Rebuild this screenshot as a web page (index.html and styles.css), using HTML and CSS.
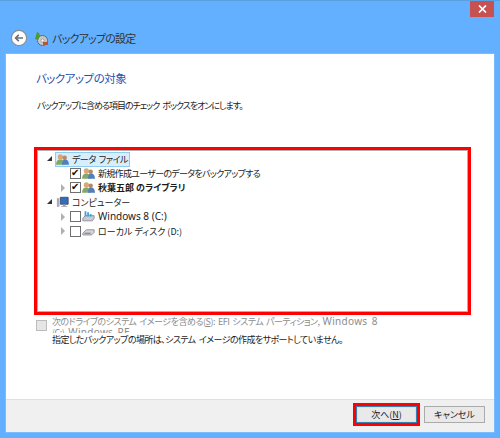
FILE: index.html
```html
<!DOCTYPE html>
<html lang="ja">
<head>
<meta charset="utf-8">
<title>バックアップの設定</title>
<link rel="stylesheet" href="styles.css">
</head>
<body>
<div class="window">
  <div class="titlebar">
    <button class="close" aria-label="閉じる"><svg width="9" height="8" viewBox="0 0 9 8"><path d="M1 .5 8 7.5M8 .5 1 7.5" stroke="#fff" stroke-width="1.7"/></svg></button>
    <div class="nav">
      <span class="back"><svg width="18" height="18" viewBox="0 0 18 18"><circle cx="9" cy="9" r="7.6" fill="#fff" stroke="#8a8f96" stroke-width="1.2"/><path d="M13 9H6M8.8 5.8 5.6 9l3.2 3.2" fill="none" stroke="#6e7074" stroke-width="1.7"/></svg></span>
      <svg class="appicon" width="15" height="15" viewBox="0 0 15 15"><circle cx="8.5" cy="9.500" r="5" fill="#c9c9c9" stroke="#666"/><circle cx="8.500" cy="9.500" r="1.6" fill="#fff" stroke="#777" stroke-width=".6"/><path d="M1 8 3 1l2 1 1 3-2 4Z" fill="#4f9a2c"/><path d="M9 11h5v3H9Z" fill="#b5563c"/></svg>
      <span class="wintitle">バックアップの設定</span>
    </div>
  </div>
  <div class="panel">
    <main class="content">
      <h1>バックアップの対象</h1>
      <p class="intro">バックアップに含める項目のチェック ボックスをオンにします。</p>
      <div class="treewrap">
        <ul class="tree">
          <li class="row"><span class="exp open"></span><span class="node top selected"><span class="rowicon"><svg width="13" height="13" viewBox="0 0 15 14"><circle cx="5" cy="4" r="3" fill="#d8a878"/><path d="M0 13c0-4 2-6 5-6s5 2 5 6Z" fill="#7fa86a"/><circle cx="10" cy="5" r="2.6" fill="#b98a62"/><path d="M7 13c0-4 1-6 3.500-6S15 9 15 13Z" fill="#4f7fc0"/></svg></span><span class="label tight">データ ファイル</span></span></li>
          <li class="row l2"><span class="exp none"></span><span class="check on"></span><span class="node"><span class="rowicon"><svg width="13" height="13" viewBox="0 0 15 14"><circle cx="5" cy="4" r="3" fill="#d8a878"/><path d="M0 13c0-4 2-6 5-6s5 2 5 6Z" fill="#7fa86a"/><circle cx="10" cy="5" r="2.600" fill="#b98a62"/><path d="M7 13c0-4 1-6 3.500-6S15 9 15 13Z" fill="#4f7fc0"/></svg></span><span class="label tighter">新規作成ユーザーのデータをバックアップする</span></span></li>
          <li class="row l2"><span class="exp closed"></span><span class="check on"></span><span class="node"><span class="rowicon"><svg width="13" height="13" viewBox="0 0 15 14"><circle cx="5" cy="4" r="3" fill="#d8a878"/><path d="M0 13c0-4 2-6 5-6s5 2 5 6Z" fill="#7fa86a"/><circle cx="10" cy="5" r="2.600" fill="#b98a62"/><path d="M7 13c0-4 1-6 3.500-6S15 9 15 13Z" fill="#4f7fc0"/></svg></span><span class="label bold">秋葉五郎 のライブラリ</span></span></li>
          <li class="row"><span class="exp open"></span><span class="node top"><span class="rowicon"><svg width="13" height="13" viewBox="0 0 15 14"><path d="M5 1h9v8H5Z" fill="#2f6fc2" stroke="#445"/><path d="M8 9h3v2h2v1H6v-1h2Z" fill="#99a"/><path d="M1 2h3v10H1Z" fill="#aab"/></svg></span><span class="label">コンピューター</span></span></li>
          <li class="row l2"><span class="exp closed"></span><span class="check"></span><span class="node"><span class="rowicon"><svg width="13" height="13" viewBox="0 0 15 14"><path d="M1 9 4 6h10v3l-2 3H1Z" fill="#c8ccd0" stroke="#889"/><path d="M3 1h2v6H3ZM6 2h2v5H6ZM9 4h2v3H9Z" fill="#39a0dc"/></svg></span><span class="label latin">Windows 8 (C:)</span></span></li>
          <li class="row l2"><span class="exp closed"></span><span class="check"></span><span class="node"><span class="rowicon"><svg width="13" height="13" viewBox="0 0 15 14"><path d="M1 9 5 5h9v3l-3 3H1Z" fill="#d4d6d8" stroke="#889"/><path d="M3 9h7" stroke="#667"/></svg></span><span class="label">ローカル ディスク (D:)</span></span></li>
        </ul>
      </div>
      <div class="sysimage">
        <span class="check disabled"></span>
        <span class="systext">次のドライブのシステム イメージを含める(<u>S</u>): EFI システム パーティション, <span class="syslatin">Windows 8</span><br>(C:)、<span class="syslatin">Windows RE</span></span>
      </div>
      <p class="warn">指定したバックアップの場所は、システム イメージの作成をサポートしていません。</p>
    </main>
    <footer class="footer">
      <button class="btn primary">次へ(<u>N</u>)</button>
      <button class="btn">キャンセル</button>
    </footer>
  </div>
</div>
</body>
</html>
```
FILE: styles.css
```css
* { box-sizing: border-box; }
html, body { margin: 0; padding: 0; }
body { width: 500px; height: 438px; overflow: hidden; font-family: "Noto Sans CJK JP", "Noto Sans", sans-serif; font-size: 9px; color: #1a1a1a; font-feature-settings: "palt"; }
.window { width: 500px; height: 438px; background: #62b0ff; border-top: 1px solid #5a9fe0; display: flex; flex-direction: column; }
.titlebar { height: 53px; position: relative; flex: none; }
.close { position: absolute; top: 0; right: 6px; width: 24px; height: 16px; padding: 0; border: 0; background: #c75050; display: flex; align-items: center; justify-content: center; }
.nav { display: flex; align-items: center; padding: 28px 0 0 10px; }
.back { width: 18px; height: 18px; display: block; }
.back svg, .appicon { display: block; }
.appicon { margin-left: 6px; }
.wintitle { margin-left: 3px; font-size: 11px; letter-spacing: -.8px; color: #333; }
.panel { margin: 0 6px; width: 488px; height: 378px; background: #fff; display: flex; flex-direction: column; flex: none; box-shadow: 0 0 0 1px #7bbcff; }
.content { flex: 1; padding: 14px 0 0 30px; display: flex; flex-direction: column; min-height: 0; }
h1 { margin: 0; font-size: 11.5px; font-weight: 400; line-height: 20px; letter-spacing: -.5px; color: #2a4fb0; }
.intro { margin: 11px 0 0 1px; font-size: 9px; line-height: 14px; letter-spacing: -1.02px; word-spacing: 2px; }
.treewrap { margin-top: 34px; margin-left: -2px; width: 437px; height: 168px; border: 3px solid #f00; position: relative; box-shadow: inset 0 0 0 1px #b0b0b0; }
.tree { list-style: none; margin: 0; padding: 2px 0 0 8px; }
.row { height: 14.4px; display: flex; align-items: center; }
.l2 { padding-left: 15px; }
.exp { width: 10px; height: 8px; flex: none; position: relative; display: block; }
.exp.open::before { content: ""; position: absolute; left: 2px; top: 1px; border-style: solid; border-width: 0 0 5px 5px; border-color: transparent transparent #333 transparent; }
.exp.closed::before { content: ""; position: absolute; left: 2px; top: 0; border-style: solid; border-width: 4px 0 4px 4px; border-color: transparent transparent transparent #b0b0b0; }
.l2 .exp.closed::before { left: 1px; }
.check { width: 11px; height: 11px; border: 1px solid #707070; background: #fff; flex: none; position: relative; display: block; margin-right: 1px; }
.check.on::after { content: "✔"; position: absolute; left: 0; top: -3px; font: 400 10px/14px "DejaVu Sans", sans-serif; color: #111; }
.check.disabled { background: #e6e6e6; border-color: #bcbcbc; margin: 0; }
.node { display: flex; align-items: center; }
.node.top { border: 1px solid transparent; height: 15px; }
.node.selected { background: #d9eefc; border-color: #8fcdf0; }
.rowicon { width: 13px; height: 13px; flex: none; display: block; }
.rowicon svg { display: block; }
.label { white-space: nowrap; line-height: 13px; padding: 0 1px 0 3px; font-size: 9px; }
.label.tight { letter-spacing: -.5px; word-spacing: 1.5px; }
.label.tighter { letter-spacing: -.7px; }
.label.bold { font-weight: 700; }
.label.latin { font-family: "Noto Sans", sans-serif; font-size: 10px; }
.sysimage { margin-top: 1px; display: flex; gap: 5px; align-items: flex-start; }
.sysimage .check { margin-top: 4px; }
.systext { width: 336px; font-size: 9px; line-height: 11px; color: #8c8c8c; height: 17px; overflow: hidden; letter-spacing: -.5px; word-spacing: 1.5px; white-space: nowrap; }
.syslatin { font-family: "Noto Sans", sans-serif; font-size: 10px; letter-spacing: .3px; }
.warn { margin: 0 0 0 16px; font-size: 9px; line-height: 14px; letter-spacing: -.58px; word-spacing: 2px; white-space: nowrap; }
.footer { height: 33px; flex: none; background: #f0f0f0; border-top: 1px solid #dfdfdf; display: flex; justify-content: flex-end; align-items: center; gap: 7px; padding: 0 9px 3px 0; }
.btn { width: 61px; height: 17px; padding: 0; background: #e9e9e9; border: 1px solid #ababab; font: 9px/14px "Noto Sans CJK JP", sans-serif; font-feature-settings: "palt"; color: #1a1a1a; }
.btn.primary { border-color: #3c7fb1; outline: 3px solid #f00; box-shadow: inset 0 0 0 1px #cfe6f7; }
```
